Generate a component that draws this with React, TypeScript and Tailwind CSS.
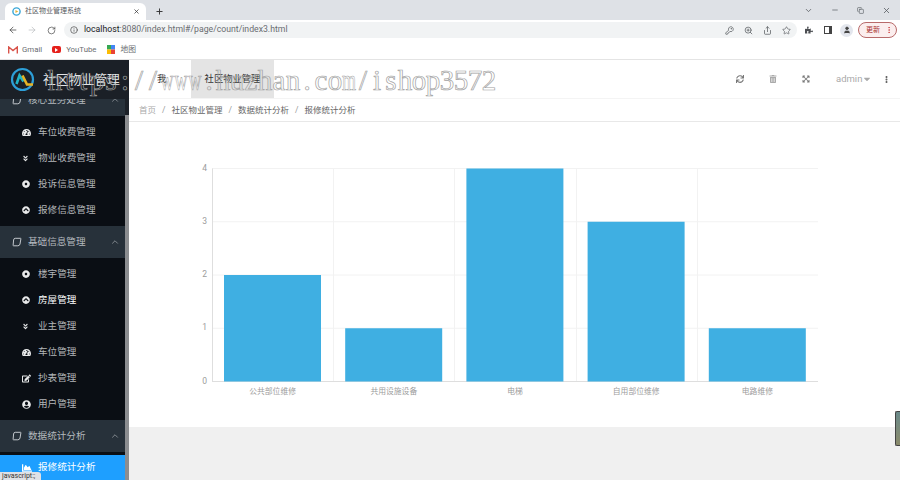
import React from "react";
import { ArrowLeft, ArrowRight, RotateCw, Info, X, Plus, ChevronDown, Minus, Copy, KeyRound, ZoomIn, Share, Star, User, ChevronUp, MoreVertical } from "lucide-react";
import { FaTachometerAlt, FaAngleDoubleDown, FaDotCircle, FaChevronCircleUp, FaEdit, FaUserCircle, FaChartArea, FaSync, FaTrashAlt, FaExpandArrowsAlt, FaCaretDown, FaEllipsisV, FaPuzzlePiece } from "react-icons/fa";

const cjk = "font-['Roboto','Noto_Sans_CJK_SC',sans-serif]";

function Leaf() {
  return (
    <svg width="10" height="10" viewBox="0 0 10 10" fill="none" stroke="#c3c8cd" strokeWidth="1" className="shrink-0">
      <path d="M3.2 1.3 H8.6 Q9 1.3 8.9 1.8 L8 7 Q7.6 8.8 5.8 8.8 H1.4 Q1 8.8 1.1 8.3 L1.6 3 Q1.8 1.3 3.2 1.3 Z" />
    </svg>
  );
}

function Section({ label, className = "" }: { label: string; className?: string }) {
  return (
    <div className={`h-8 shrink-0 flex items-center pl-[12px] pr-[5px] bg-[#27313a] text-[#b4b9be] text-[9.6px] ${className}`}>
      <Leaf />
      <span className="ml-[6px] flex-1 whitespace-nowrap">{label}</span>
      <ChevronUp size={10} strokeWidth={1.5} />
    </div>
  );
}

function Item({ icon, label, bright }: { icon: React.ReactNode; label: string; bright?: boolean }) {
  return (
    <div className={`h-[26px] shrink-0 flex items-center pl-[22px] text-[9.6px] ${bright ? "text-white" : "text-[#b3b6b9]"}`}>
      <span className="w-[16px] flex items-center text-[#e8e9ea]">{icon}</span>
      <span className="whitespace-nowrap">{label}</span>
    </div>
  );
}

const wm = "https://www.huzhan.com/ishop3572".split("");
const W = 121.2;
const names = ["公共部位维修", "共用设施设备", "电梯", "自用部位维修", "电路维修"];
const values = [2, 1, 4, 3, 1];

function Chart() {
  const x0 = 83, top = 46.5, bottom = 259.5;
  const right = 689;
  const unit = (bottom - top) / 4;
  return (
    <svg width="771" height="305" viewBox="0 0 771 305" className="block">
      {[1, 2, 3, 4].map((v) => (
        <line key={v} x1={x0} x2={right} y1={bottom - v * unit} y2={bottom - v * unit} stroke="#f2f2f2" />
      ))}
      {[1, 2, 3, 4].map((i) => (
        <line key={i} x1={Math.round(x0 + i * W) + 0.5} x2={Math.round(x0 + i * W) + 0.5} y1={top} y2={bottom} stroke="#f2f2f2" />
      ))}
      <line x1={x0 + 0.5} x2={x0 + 0.5} y1={top} y2={bottom} stroke="#dedede" />
      <line x1={x0} x2={right} y1={bottom} y2={bottom} stroke="#dedede" />
      {values.map((v, i) => (
        <rect key={i} x={x0 + 12 + i * W} y={bottom - v * unit} width={97} height={v * unit} fill="#3fafe2" />
      ))}
      {[0, 1, 2, 3, 4].map((v) => (
        <text key={v} x={78} y={bottom - v * unit + 2} textAnchor="end" fontSize="8.5" fill="#9c9c9c" fontFamily="Roboto, sans-serif">{v}</text>
      ))}
      {names.map((n, i) => (
        <text key={n} x={x0 + W / 2 + i * W} y={272} textAnchor="middle" fontSize="7.8" fill="#9c9c9c" fontFamily="'Noto Sans CJK SC', sans-serif">{n}</text>
      ))}
    </svg>
  );
}

export default function App() {
  return (
    <div className={`relative w-[900px] h-[480px] overflow-hidden bg-white ${cjk}`}>
      {/* tab strip */}
      <div className="h-5 bg-[#dee1e6] flex items-end pl-[5px] text-[#3c4043]">
        <div className="w-[141px] h-[17px] bg-white rounded-t-[6px] flex items-center pl-[7px] pr-[6px]">
          <svg width="9" height="9" viewBox="0 0 10 10" className="shrink-0">
            <circle cx="5" cy="5" r="4" fill="none" stroke="#3aa7d8" strokeWidth="1.6" />
            <path d="M3.8 3.2 L7 5 L3.8 6.8 Z" fill="#e0b23a" />
          </svg>
          <span className="ml-[4px] flex-1 text-[7px] whitespace-nowrap text-[#55585c]">社区物业管理系统</span>
          <X size={7} strokeWidth={2.5} className="text-[#333]" />
        </div>
        <Plus size={9} strokeWidth={2.5} className="ml-[9px] mb-[4px] text-[#333]" />
        <div className="flex-1" />
        <div className="flex items-center gap-[18px] h-full pr-[9px] text-[#50545a]">
          <ChevronDown size={9} />
          <Minus size={8} />
          <Copy size={7} />
          <X size={9} />
        </div>
      </div>
      {/* toolbar */}
      <div className="h-5 bg-white flex items-center pl-[8px] text-[#5f6368]">
        <ArrowLeft size={10} strokeWidth={1.8} className="text-[#444]" />
        <ArrowRight size={10} strokeWidth={1.5} className="ml-[9px] text-[#b0b3b7]" />
        <RotateCw size={9} strokeWidth={1.8} className="ml-[10px] text-[#444]" />
        <div className="ml-[8px] w-[733px] shrink-0 h-4 rounded-full bg-[#f1f3f4] flex items-center pl-[6px] pr-[6px]">
          <Info size={8} className="text-[#444]" />
          <span className="ml-[6px] text-[8.7px] text-[#6a6d71] whitespace-nowrap"><span className="text-[#202124]">localhost</span>:8080/index.html#/page/count/index3.html</span>
          <div className="flex-1" />
          <div className="flex items-center gap-[10px] text-[#5a5d61]">
            <KeyRound size={9} strokeWidth={2} />
            <ZoomIn size={9} />
            <Share size={9} />
            <Star size={9} strokeWidth={1.8} />
          </div>
        </div>
        <FaPuzzlePiece size={8} className="ml-[8px] text-[#4c4f53]" />
        <div className="ml-[11px] w-[8px] h-[8px] border border-[#444] border-r-[3px]" />
        <div className="ml-[8px] w-[13px] h-[13px] rounded-full bg-[#e3e6ed] flex items-center justify-center"><User size={8} fill="#444" className="text-[#444]" /></div>
        <div className="ml-[5px] w-[39px] h-[16px] rounded-full border border-[#b86a6a] bg-[#fbeeee] flex items-center pl-[7px] text-[7px] text-[#a33]">
          <span className="flex-1">更新</span>
          <MoreVertical size={8} className="mr-[3px] text-[#c33]" />
        </div>
      </div>
      {/* bookmarks */}
      <div className="h-5 bg-white border-b border-[#e4e4e4] flex items-center pl-[8px] text-[7.8px] text-[#6a6d71]">
        <svg width="10" height="8" viewBox="0 0 10 8" fill="none"><path d="M0.7 7.5 V1 L5 4.5 L9.3 1 V7.5" stroke="#d9534a" strokeWidth="1.4" /></svg>
        <span className="ml-[4px]">Gmail</span>
        <span className="ml-[10px] w-[9px] h-[7px] rounded-[2px] bg-[#e5201b] flex items-center justify-center"><span className="w-0 h-0 border-l-[3px] border-l-white border-y-[2px] border-y-transparent" /></span>
        <span className="ml-[5px]">YouTube</span>
        <svg className="ml-[11px]" width="8" height="9" viewBox="0 0 8 9"><rect width="4" height="4.5" fill="#34a853" /><rect x="4" width="4" height="4.5" fill="#4285f4" /><rect y="4.5" width="4" height="4.5" fill="#fbbc04" /><rect x="4" y="4.5" width="4" height="4.5" fill="#ea4335" /></svg>
        <span className="ml-[5px]">地图</span>
      </div>
      {/* page */}
      <div className="h-[420px] flex">
        <aside className="w-[129px] shrink-0 flex bg-[#0a0e14]">
          <div className="flex-1 min-w-0 flex flex-col overflow-hidden">
            <div className="relative z-10 h-[39px] shrink-0 bg-[#1b2027] flex items-center pl-[10px]">
              <svg width="25" height="25" viewBox="0 0 25 25" fill="none">
                <circle cx="12.5" cy="12.5" r="10.5" stroke="#2d9fd8" strokeWidth="2.2" />
                <path d="M6.5 17 L9.5 8.5 L13.5 14.5" stroke="#22b5c8" strokeWidth="2.6" />
                <path d="M12.5 8.5 L17 17.5 H23" stroke="#e6b325" strokeWidth="2.6" />
              </svg>
              <span className="ml-[8px] text-[12.8px] text-[#e2e4e6] whitespace-nowrap">社区物业管理</span>
            </div>
            <Section label="核心业务处理" className="-mt-[15px]" />
            <div className="h-[3px] shrink-0" />
            <Item icon={<FaTachometerAlt size={9} />} label="车位收费管理" />
            <Item icon={<FaAngleDoubleDown size={7} />} label="物业收费管理" />
            <Item icon={<FaDotCircle size={8} />} label="投诉信息管理" />
            <Item icon={<FaChevronCircleUp size={8} />} label="报修信息管理" />
            <div className="h-[3px] shrink-0" />
            <Section label="基础信息管理" />
            <div className="h-[3px] shrink-0" />
            <Item icon={<FaDotCircle size={8} />} label="楼宇管理" />
            <Item icon={<FaChevronCircleUp size={8} />} label="房屋管理" bright />
            <Item icon={<FaAngleDoubleDown size={7} />} label="业主管理" />
            <Item icon={<FaTachometerAlt size={9} />} label="车位管理" />
            <Item icon={<FaEdit size={9} />} label="抄表管理" />
            <Item icon={<FaUserCircle size={9} />} label="用户管理" />
            <div className="h-[3px] shrink-0" />
            <Section label="数据统计分析" />
            <div className="h-[3px] shrink-0" />
            <div className="flex-1 bg-[#1e9fff] flex items-center pl-[22px] text-[9.6px] text-white">
              <span className="w-[16px]"><FaChartArea size={10} /></span>
              <span className="whitespace-nowrap">报修统计分析</span>
            </div>
          </div>
          <div className="w-[4px] shrink-0 flex flex-col">
            <div className="h-[55px] bg-[#1b2027]" />
            <div className="flex-1 bg-[#8b8d90]" />
          </div>
        </aside>
        <main className="flex-1 min-w-0 flex flex-col bg-[#f0f0f0]">
          <header className="h-[39px] shrink-0 bg-white border-b border-[#f4f4f4] flex items-center text-[#8f8f8f]">
            <div className="w-[62px] pl-[28px] text-[9.3px] text-[#333] overflow-hidden whitespace-nowrap">我</div>
            <div className="w-[83px] h-full bg-[#e4e4e4] flex items-center justify-center text-[9.3px] text-[#333] whitespace-nowrap">社区物业管理</div>
            <div className="flex-1" />
            <FaSync size={8} className="text-[#777]" />
            <FaTrashAlt size={8} className="ml-[25px] text-[#aaa]" />
            <FaExpandArrowsAlt size={8} className="ml-[25px] text-[#777]" />
            <span className="ml-[26px] w-[26px] text-[9.5px] text-[#aaa]">admin</span>
            <FaCaretDown size={10} className="text-[#aaa]" />
            <FaEllipsisV size={7} className="ml-[11px] mr-[10px] text-[#666]" />
          </header>
          <div className="h-[23px] shrink-0 bg-white border-b border-[#e8e8e8] flex items-center pl-[10px] pt-[1px] text-[8.5px] text-[#666] whitespace-nowrap">
            <span className="text-[#aaa]">首页</span>
            <span className="mx-[6px] text-[#999]">/</span>
            <span>社区物业管理</span>
            <span className="mx-[6px] text-[#999]">/</span>
            <span>数据统计分析</span>
            <span className="mx-[6px] text-[#999]">/</span>
            <span>报修统计分析</span>
          </div>
          <section className="h-[305px] shrink-0 bg-white">
            <Chart />
          </section>
        </main>
      </div>
      {/* watermark overlay */}
      <div className="absolute z-20 left-[48px] top-[64px] flex font-['Liberation_Serif',serif] text-[29px] leading-[32px] text-transparent [-webkit-text-stroke:0.7px_#a2a2a2] pointer-events-none">
        {wm.map((c, i) => (
          <span key={i} className={`w-[14px] flex justify-center ${c === "w" || c === "m" ? "scale-x-[0.62]" : ""}`}>{c}</span>
        ))}
      </div>
      {/* status bubble */}
      <div className="absolute z-20 left-0 bottom-0 h-[8px] w-[41px] bg-[#dfe1e5] rounded-tr-[3px] text-[7px] leading-[8px] text-[#333] pl-[2px] overflow-hidden whitespace-nowrap">javascript:;</div>
      {/* desktop widget */}
      <div className="absolute right-0 top-[411px] w-[5px] h-[35px] rounded-l-[2px] border border-r-0 border-[#444] bg-gradient-to-b from-[#6a8a8a] to-[#8a8a6a]" />
    </div>
  );
}
